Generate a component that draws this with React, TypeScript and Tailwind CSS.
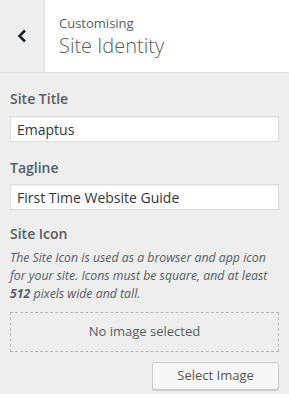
export default function App() {
  return (
    <div
      className="w-[289px] h-[394px] overflow-hidden bg-[#eeeeee] text-[#555d66]"
      style={{ fontFamily: '"Open Sans", sans-serif' }}
    >
      <header className="flex h-[73px] border-b border-[#dddddd] bg-white">
        <button className="flex w-[45px] items-center justify-center border-r border-[#dddddd] bg-[#eeeeee] text-[#23282d]">
          <svg width="10" height="14" viewBox="0 0 10 14">
            <path d="M8 1.5 L2.5 7 L8 12.5" fill="none" stroke="currentColor" strokeWidth="2.6" />
          </svg>
        </button>
        <div className="flex flex-col justify-center pl-[14px] pt-[1px]">
          <span className="text-[13px] leading-[18px] text-[#555d66]">Customising</span>
          <h1 className="text-[20px] font-light leading-[28px] text-[#555d66]">Site Identity</h1>
        </div>
      </header>

      <main className="px-[10px] pt-[14px]">
        <label className="block">
          <span className="block text-[14px] font-semibold leading-[24px] text-[#555d66]">Site Title</span>
          <input
            defaultValue="Emaptus"
            className="mt-[5px] block h-[26px] w-[269px] border border-[#dddddd] bg-white px-[6px] text-[14px] text-[#32373c] shadow-[inset_0_1px_2px_rgba(0,0,0,0.07)] outline-none"
          />
        </label>

        <label className="mt-[14px] block">
          <span className="block text-[14px] font-semibold leading-[24px] text-[#555d66]">Tagline</span>
          <input
            defaultValue="First Time Website Guide"
            className="mt-[4px] block h-[26px] w-[269px] border border-[#dddddd] bg-white px-[6px] text-[14px] text-[#32373c] shadow-[inset_0_1px_2px_rgba(0,0,0,0.07)] outline-none"
          />
        </label>

        <div className="mt-[12px]">
          <span className="block text-[14px] font-semibold leading-[24px] text-[#555d66]">Site Icon</span>
          <p className="mt-[3px] text-[12.3px] italic leading-[18px] text-[#555d66]">
            The Site Icon is used as a browser and app icon for your site. Icons must be square, and at least{" "}
            <strong className="font-bold">512</strong> pixels wide and tall.
          </p>
          <div className="mt-[9px] flex h-[40px] w-[269px] items-center justify-center border border-dashed border-[#b4b9be] text-[13px] text-[#555d66]">
            No image selected
          </div>
          <div className="mt-[10px] flex justify-end">
            <button className="h-[28px] w-[127px] rounded-[3px] border border-[#cccccc] bg-[#f7f7f7] text-[13px] text-[#555555] shadow-[0_1px_0_#cccccc]">
              Select Image
            </button>
          </div>
        </div>
      </main>
    </div>
  );
}
